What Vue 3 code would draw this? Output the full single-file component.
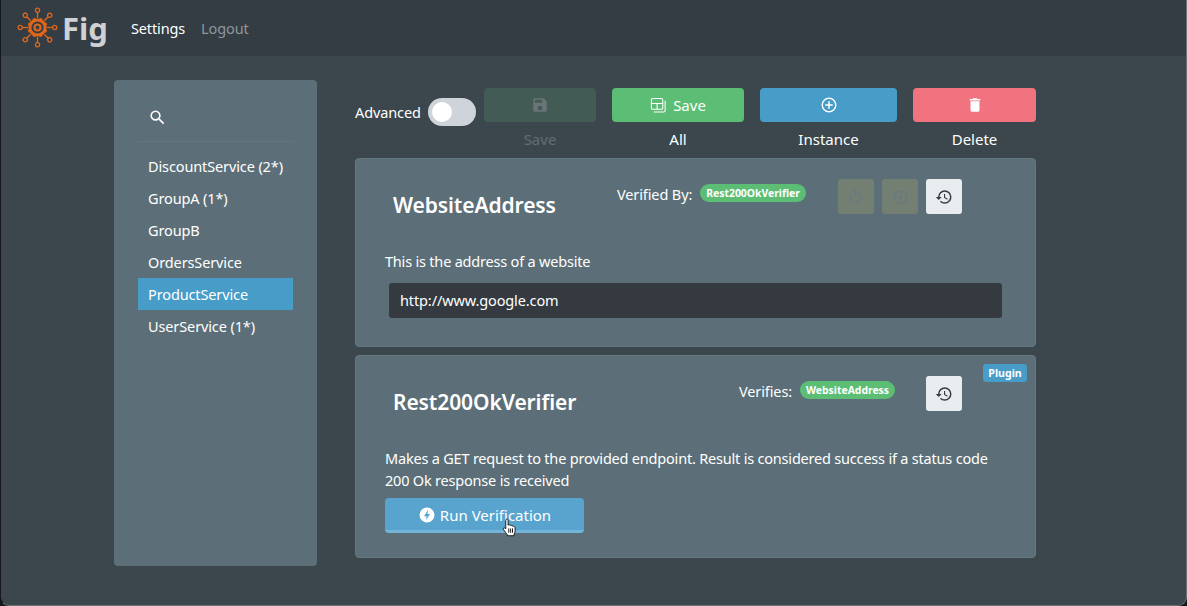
<script setup>
const services = [
  { name: 'DiscountService (2*)' },
  { name: 'GroupA (1*)' },
  { name: 'GroupB' },
  { name: 'OrdersService' },
  { name: 'ProductService', active: true },
  { name: 'UserService (1*)' },
]

const icons = {
  search:
    'M9.5,3A6.5,6.5 0 0,1 16,9.5C16,11.11 15.41,12.59 14.44,13.73L14.71,14H15.5L20.5,19L19,20.5L14,15.5V14.71L13.73,14.44C12.59,15.41 11.11,16 9.5,16A6.5,6.5 0 0,1 3,9.5A6.5,6.5 0 0,1 9.5,3M9.5,5C7,5 5,7 5,9.5C5,12 7,14 9.5,14C12,14 14,12 14,9.5C14,7 12,5 9.5,5Z',
  save: 'M15,9H5V5H15M12,19A3,3 0 0,1 9,16A3,3 0 0,1 12,13A3,3 0 0,1 15,16A3,3 0 0,1 12,19M17,3H5C3.89,3 3,3.9 3,5V19A2,2 0 0,0 5,21H19A2,2 0 0,0 21,19V7L17,3Z',
  plus: 'M12,20C7.59,20 4,16.41 4,12C4,7.59 7.59,4 12,4C16.41,4 20,7.59 20,12C20,16.41 16.41,20 12,20M12,2A10,10 0 0,0 2,12A10,10 0 0,0 12,22A10,10 0 0,0 22,12A10,10 0 0,0 12,2M13,7H11V11H7V13H11V17H13V13H17V11H13V7Z',
  trash: 'M19,4H15.5L14.5,3H9.5L8.5,4H5V6H19M6,19A2,2 0 0,0 8,21H16A2,2 0 0,0 18,19V7H6V19Z',
  history:
    'M13.5,8H12V13L16.28,15.54L17,14.33L13.5,12.25V8M13,3A9,9 0 0,0 4,12H1L4.96,16.03L9,12H6A7,7 0 0,1 13,5A7,7 0 0,1 20,12A7,7 0 0,1 13,19C11.07,19 9.32,18.21 8.06,16.94L6.64,18.36C8.27,20 10.5,21 13,21A9,9 0 0,0 22,12A9,9 0 0,0 13,3Z',
  restart:
    'M12,4C14.1,4 16.1,4.8 17.6,6.3C20.7,9.4 20.7,14.5 17.6,17.6C15.8,19.5 13.3,20.2 10.9,19.9L11.4,17.9C13.1,18.1 14.9,17.5 16.2,16.2C18.5,13.9 18.5,10.1 16.2,7.7C15.1,6.6 13.5,6 12,6V10.6L7,5.6L12,0.6V4M6.3,17.6C3.7,15 3.2,11 4.9,7.9L6.4,9.4C5.3,11.6 5.7,14.4 7.6,16.2C8.1,16.7 8.7,17.1 9.4,17.4L8.8,19.4C7.9,19 7,18.4 6.3,17.6Z',
  historyPlus:
    'M13,3A9,9 0 0,0 4,12H1L4.96,16.03L9,12H6A7,7 0 0,1 13,5A7,7 0 0,1 20,12A7,7 0 0,1 13,19C11.07,19 9.32,18.21 8.06,16.94L6.64,18.36C8.27,20 10.5,21 13,21A9,9 0 0,0 22,12A9,9 0 0,0 13,3M12,8V11H9V13H12V16H14V13H17V11H14V8H12Z',
  bolt: 'M12,2A10,10 0 1,0 12,22A10,10 0 1,0 12,2M13.5,5L8,13.5H11.5L10.5,19L16,10.5H12.5L13.5,5Z',
}

const spokes = Array.from({ length: 8 }, (_, i) => i * 45)
const teeth = Array.from({ length: 8 }, (_, i) => i * 45 + 22.5)
</script>

<template>
  <div class="window">
    <header class="topbar">
      <div class="brand">
        <svg class="logo" viewBox="0 0 41 41" fill="none" stroke="#e0661c" stroke-width="1.3">
          <g v-for="a in spokes" :key="a" :transform="`rotate(${a} 20.5 20.5)`">
            <line x1="20.5" y1="11" x2="20.5" y2="5.2" />
            <circle cx="20.5" cy="3.2" r="2.1" />
          </g>
          <circle cx="20.5" cy="20.5" r="7.6" stroke-width="3" />
          <g v-for="a in teeth" :key="'t' + a" :transform="`rotate(${a} 20.5 20.5)`">
            <rect x="19" y="10.6" width="3" height="2.6" fill="#e0661c" stroke="none" />
          </g>
          <circle cx="20.5" cy="20.5" r="3" stroke-width="2.2" />
        </svg>
        <span class="brand-name">Fig</span>
      </div>
      <nav class="nav">
        <a class="nav-link nav-link--on">Settings</a>
        <a class="nav-link">Logout</a>
      </nav>
    </header>

    <main class="page">
      <aside class="sidebar">
        <div class="search">
          <svg class="icon search-icon" viewBox="0 0 24 24"><path :d="icons.search" /></svg>
        </div>
        <ul class="service-list">
          <li
            v-for="s in services"
            :key="s.name"
            class="service"
            :class="{ 'service--active': s.active }"
          >
            {{ s.name }}
          </li>
        </ul>
      </aside>

      <section class="content">
        <div class="toolbar">
          <div class="advanced">
            <span>Advanced</span>
            <span class="toggle"><span class="knob"></span></span>
          </div>
          <div class="action action--save">
            <button class="btn btn--off">
              <svg class="icon" viewBox="0 0 24 24"><path :d="icons.save" /></svg>
            </button>
            <span class="action-label action-label--off">Save</span>
          </div>
          <div class="action action--all">
            <button class="btn btn--green">
              <svg class="save-all" viewBox="0 0 18 18" fill="none" stroke="#fff" stroke-width="1.1">
                <rect x="1.5" y="1.5" width="12" height="11.5" rx="1.4" />
                <path d="M1.5 6.8H13.5M7.5 6.8V13M16 4V14.2A1.6 1.6 0 0 1 14.4 15.8H4" />
              </svg>
              Save
            </button>
            <span class="action-label">All</span>
          </div>
          <div class="action action--instance">
            <button class="btn btn--blue">
              <svg class="icon" viewBox="0 0 24 24"><path :d="icons.plus" /></svg>
            </button>
            <span class="action-label">Instance</span>
          </div>
          <div class="action action--delete">
            <button class="btn btn--red">
              <svg class="icon" viewBox="0 0 24 24"><path :d="icons.trash" /></svg>
            </button>
            <span class="action-label">Delete</span>
          </div>
        </div>

        <article class="card card--one">
          <div class="card-head">
            <h2 class="card-title card-title--one">WebsiteAddress</h2>
            <div class="link-info link-info--one">
              <span>Verified By:</span>
              <span class="chip">Rest200OkVerifier</span>
            </div>
            <div class="tools">
              <button class="tool tool--off">
                <svg class="icon" viewBox="0 0 24 24"><path :d="icons.restart" /></svg>
              </button>
              <button class="tool tool--off">
                <svg class="icon" viewBox="0 0 24 24"><path :d="icons.historyPlus" /></svg>
              </button>
              <button class="tool">
                <svg class="icon" viewBox="0 0 24 24"><path :d="icons.history" /></svg>
              </button>
            </div>
          </div>
          <p class="desc">This is the address of a website</p>
          <div class="field">http://www.google.com</div>
        </article>

        <article class="card card--two">
          <span class="plugin">Plugin</span>
          <div class="card-head">
            <h2 class="card-title card-title--two">Rest200OkVerifier</h2>
            <div class="link-info link-info--two">
              <span>Verifies:</span>
              <span class="chip">WebsiteAddress</span>
            </div>
            <div class="tools">
              <button class="tool">
                <svg class="icon" viewBox="0 0 24 24"><path :d="icons.history" /></svg>
              </button>
            </div>
          </div>
          <p class="desc">
            Makes a GET request to the provided endpoint. Result is considered success if a status
            code 200 Ok response is received
          </p>
          <button class="run">
            <svg class="run-icon" viewBox="0 0 24 24"><path :d="icons.bolt" fill-rule="evenodd" /></svg>
            Run Verification
            <svg class="cursor" viewBox="0 0 16 20">
              <path
                d="M4.5 1.2C5.5.6 6.4 1.2 6.5 2.2V7.4L7.4 7.2C8 7 8.7 7.2 9 7.7 9.6 7.4 10.4 7.6 10.7 8.2 11.4 8 12.2 8.3 12.5 9 13.1 8.9 13.9 9.3 14 10.1V14C14 15.4 13.4 16.4 12.8 17.2V18.8H5.6V17.4C4.4 16.2 3.2 14.4 1.6 12.2 1 11.2 1.6 10.2 2.6 10.4L4 11.2V2.4C4 2 4.1 1.5 4.5 1.2Z"
                fill="#fff"
                stroke="#111"
                stroke-width="1"
                stroke-linejoin="round"
              />
              <path d="M7.2 11V15.6M9.2 11V15.6M11.2 11V15.6" stroke="#111" stroke-width="1" fill="none" />
            </svg>
          </button>
        </article>
      </section>
    </main>
  </div>
</template>

<style>
html,
body {
  margin: 0;
  background: #16191c;
  overflow: hidden;
}
</style>

<style scoped>
* {
  box-sizing: border-box;
}

.window {
  width: 1187px;
  height: 606px;
  display: flex;
  flex-direction: column;
  background: #3b474c;
  border-left: 1px solid #16191c;
  border-right: 1px solid #6b7175;
  border-bottom: 1px solid #6b7175;
  border-radius: 0 0 9px 9px;
  overflow: hidden;
  color: #fff;
  font-family: 'Noto Sans', 'Open Sans', sans-serif;
  font-size: 14.5px;
  letter-spacing: -0.12px;
}

.topbar {
  height: 56px;
  flex: none;
  display: flex;
  align-items: center;
  background: #343c44;
  padding-left: 16px;
}

.brand {
  display: flex;
  align-items: center;
  gap: 4px;
}

.logo {
  width: 41px;
  height: 41px;
  margin-top: -1px;
}

.brand-name {
  font-size: 31px;
  font-weight: 700;
  line-height: 40px;
  letter-spacing: 0;
  color: #cfd1d3;
}

.nav {
  display: flex;
  gap: 16px;
  margin-left: 23px;
}

.nav-link {
  color: #8f979c;
}
.nav-link--on {
  color: #fff;
}

.page {
  flex: 1;
  display: flex;
  gap: 38px;
  padding: 24px 0 0 113px;
}

.sidebar {
  width: 203px;
  height: 486px;
  background: #5c6f78;
  border-radius: 4px;
  padding-left: 24px;
}

.search {
  width: 155px;
  height: 62px;
  padding: 28px 0 0 10px;
  border-bottom: 1px solid #64767e;
}

.icon {
  width: 18px;
  height: 18px;
  fill: currentColor;
  display: block;
}

.search-icon {
  width: 19px;
  height: 19px;
}

.service-list {
  list-style: none;
  margin: 8px 0 0;
  padding: 0;
  width: 155px;
}

.service {
  height: 32px;
  line-height: 32px;
  padding-left: 10px;
  white-space: nowrap;
}
.service--active {
  background: #479cc8;
}

.content {
  width: 681px;
  display: flex;
  flex-direction: column;
  gap: 8px;
}

.toolbar {
  height: 70px;
  padding-top: 8px;
  display: flex;
  gap: 16px;
  flex: none;
}

.advanced {
  display: flex;
  align-items: center;
  gap: 7px;
  width: 121px;
  height: 28px;
  margin: 10px -8px 0 0;
}

.toggle {
  width: 48px;
  height: 28px;
  border-radius: 14px;
  background: #ced4da;
  padding: 4px;
  flex: none;
}

.knob {
  display: block;
  width: 20px;
  height: 20px;
  border-radius: 50%;
  background: #fff;
}

.action {
  display: flex;
  flex-direction: column;
  align-items: center;
  font-size: 15px;
  letter-spacing: 0;
}
.action--save {
  width: 112px;
}
.action--all {
  width: 132px;
}
.action--instance {
  width: 137px;
}
.action--delete {
  width: 123px;
}

.action-label {
  margin-top: 6px;
  line-height: 22px;
}
.action-label--off {
  color: #616e73;
}

.btn {
  width: 100%;
  height: 35px;
  border: none;
  border-radius: 4px;
  color: #fff;
  font: inherit;
  display: flex;
  align-items: center;
  justify-content: center;
  gap: 6px;
  padding: 0;
}
.btn--off {
  background: #435b55;
  color: #6a7478;
}
.btn--green {
  background: #5cbe75;
}
.btn--blue {
  background: #479cc8;
}
.btn--red {
  background: #f27380;
}

.save-all {
  width: 17px;
  height: 17px;
}

.card {
  position: relative;
  flex: none;
  background: #5c6f78;
  border: 1px solid #66787f;
  border-radius: 4px;
  padding: 20px 33px 0 29px;
}
.card--one {
  height: 189px;
}
.card--two {
  height: 203px;
}

.card-head {
  display: flex;
  height: 35px;
}

.card-title {
  margin: 0 0 0 8px;
  font-size: 21px;
  font-weight: 600;
  line-height: 30px;
  letter-spacing: -0.1px;
  white-space: nowrap;
}
.card-title--one {
  flex: 0 0 224px;
  padding-top: 11px;
}
.card-title--two {
  flex: 0 0 346px;
  padding-top: 11px;
}

.link-info {
  display: flex;
  align-items: flex-start;
  gap: 8px;
  padding-top: 4px;
  line-height: 22px;
  white-space: nowrap;
}
.link-info--one {
  flex: 0 0 221px;
}
.link-info--two {
  flex: 0 0 187px;
}

.chip {
  height: 18px;
  line-height: 18px;
  margin-top: 1px;
  padding: 0 6px;
  border-radius: 9px;
  background: #5cbe75;
  font-size: 10.4px;
  font-weight: 700;
  letter-spacing: 0;
}

.tools {
  display: flex;
  gap: 8px;
}

.tool {
  width: 36px;
  height: 35px;
  border: none;
  border-radius: 3px;
  background: #e8ecef;
  color: #343c44;
  display: flex;
  align-items: center;
  justify-content: center;
  padding: 0;
}
.tool--off {
  background: #747f73;
  color: #687a80;
}

.desc {
  margin: 36px 0 0;
  line-height: 22px;
  letter-spacing: -0.2px;
}

.field {
  width: 613px;
  height: 35px;
  margin: 11px 0 0 4px;
  padding-left: 11px;
  line-height: 35px;
  background: #343a40;
  border-radius: 3px;
}

.plugin {
  position: absolute;
  top: 8px;
  right: 8px;
  width: 44px;
  height: 18px;
  line-height: 18px;
  text-align: center;
  background: #479cc8;
  border-radius: 3px;
  font-size: 10.6px;
  font-weight: 700;
  letter-spacing: 0;
}

.run {
  position: relative;
  width: 199px;
  height: 35px;
  margin-top: 7px;
  border: none;
  border-bottom: 3px solid #74b4d8;
  border-radius: 4px;
  background: #58a4cf;
  color: #fff;
  font: inherit;
  font-size: 15px;
  letter-spacing: 0;
  display: flex;
  align-items: center;
  justify-content: center;
  gap: 4px;
  padding: 1px 0 0;
}

.run-icon {
  width: 18px;
  height: 18px;
  fill: #fff;
}

.cursor {
  position: absolute;
  left: 117px;
  top: 20px;
  width: 15px;
  height: 19px;
}
</style>
